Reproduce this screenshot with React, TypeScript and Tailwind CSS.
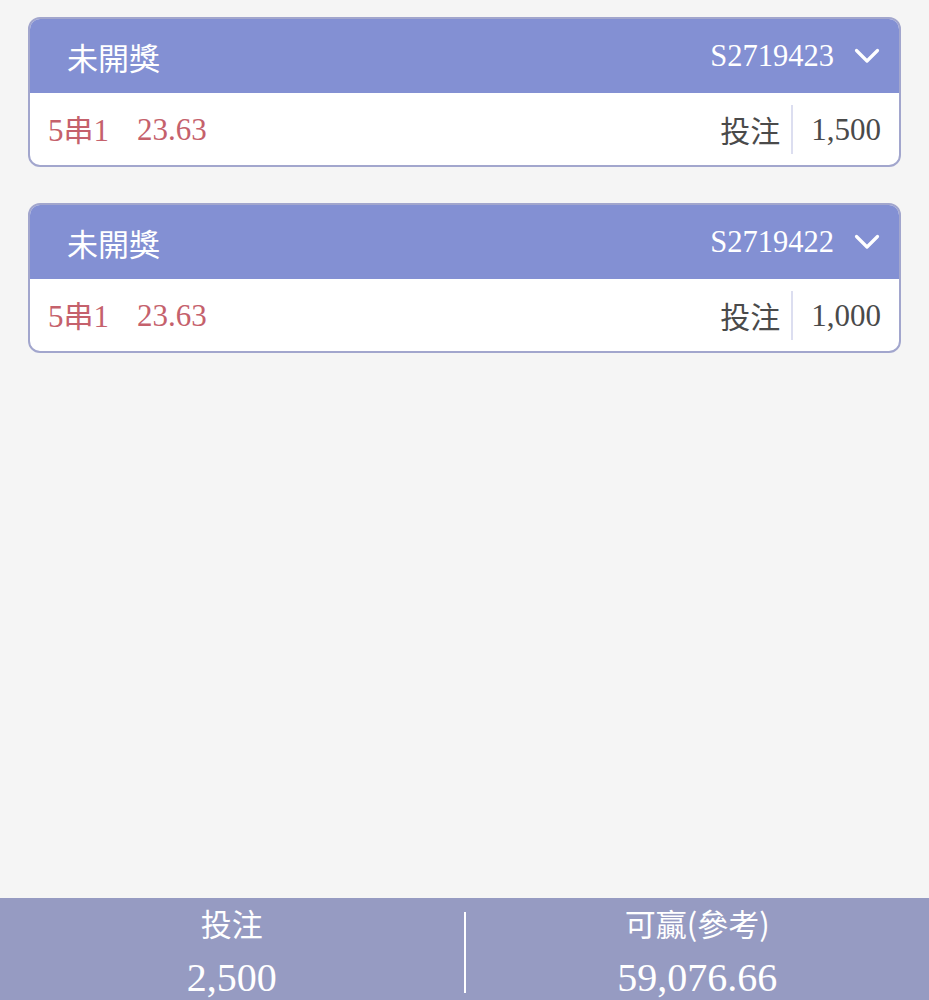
import React from "react";

const FONT = { fontFamily: '"Liberation Serif", "Noto Sans CJK TC", serif' };
const CJK = { fontFamily: '"Noto Sans CJK TC", "Liberation Sans", sans-serif' };

function Chevron() {
  return (
    <svg width="26" height="18" viewBox="0 0 26 18" fill="none">
      <path d="M2.5 3.5 L13 14 L23.5 3.5" stroke="white" strokeWidth="3.2" strokeLinecap="round" strokeLinejoin="round" />
    </svg>
  );
}

function Card({ id, amount }: { id: string; amount: string }) {
  return (
    <div className="rounded-[12px] border-2 border-[#a2a6cd] bg-white overflow-hidden">
      <div className="h-[74px] bg-[#8390d3] flex items-center justify-between pl-[37px] pr-[19px]">
        <span className="text-[31px] text-white leading-none" style={CJK}>未開獎</span>
        <div className="flex items-center gap-[20px]">
          <span className="text-[30.5px] text-white leading-none" style={FONT}>{id}</span>
          <Chevron />
        </div>
      </div>
      <div className="h-[72px] flex items-center justify-between pl-[18px] pr-[18px]">
        <div className="flex items-center text-[#c5616c] text-[31px] leading-none" style={FONT}>
          <span>5<span style={CJK} className="text-[30px]">串</span>1</span>
          <span className="ml-[28px]">23.63</span>
        </div>
        <div className="flex items-center h-full">
          <span className="text-[30px] text-[#4a4a4a] leading-none" style={CJK}>投注</span>
          <div className="w-[2px] h-[49px] bg-[#dcdef0] ml-[11px] mr-[18px]" />
          <span className="text-[31px] text-[#4a4a4a] leading-none" style={FONT}>{amount}</span>
        </div>
      </div>
    </div>
  );
}

export default function App() {
  return (
    <div className="h-screen w-full bg-[#f5f5f5] flex flex-col overflow-hidden">
      <div className="px-[28px] pt-[17px] flex flex-col gap-[36px]">
        <Card id="S2719423" amount="1,500" />
        <Card id="S2719422" amount="1,000" />
      </div>
      <div className="mt-auto h-[102px] bg-[#969bc2] flex relative">
        <div className="flex-1 flex flex-col items-center text-white">
          <span className="mt-[7px] text-[31px] leading-[36px]" style={CJK}>投注</span>
          <span className="mt-[15px] text-[40px] leading-[44px]" style={FONT}>2,500</span>
        </div>
        <div className="w-[2px] bg-white mt-[14px] mb-[7px]" />
        <div className="flex-1 flex flex-col items-center text-white">
          <span className="mt-[7px] text-[31px] leading-[36px]" style={CJK}>可贏(參考)</span>
          <span className="mt-[15px] text-[40px] leading-[44px]" style={FONT}>59,076.66</span>
        </div>
      </div>
    </div>
  );
}
